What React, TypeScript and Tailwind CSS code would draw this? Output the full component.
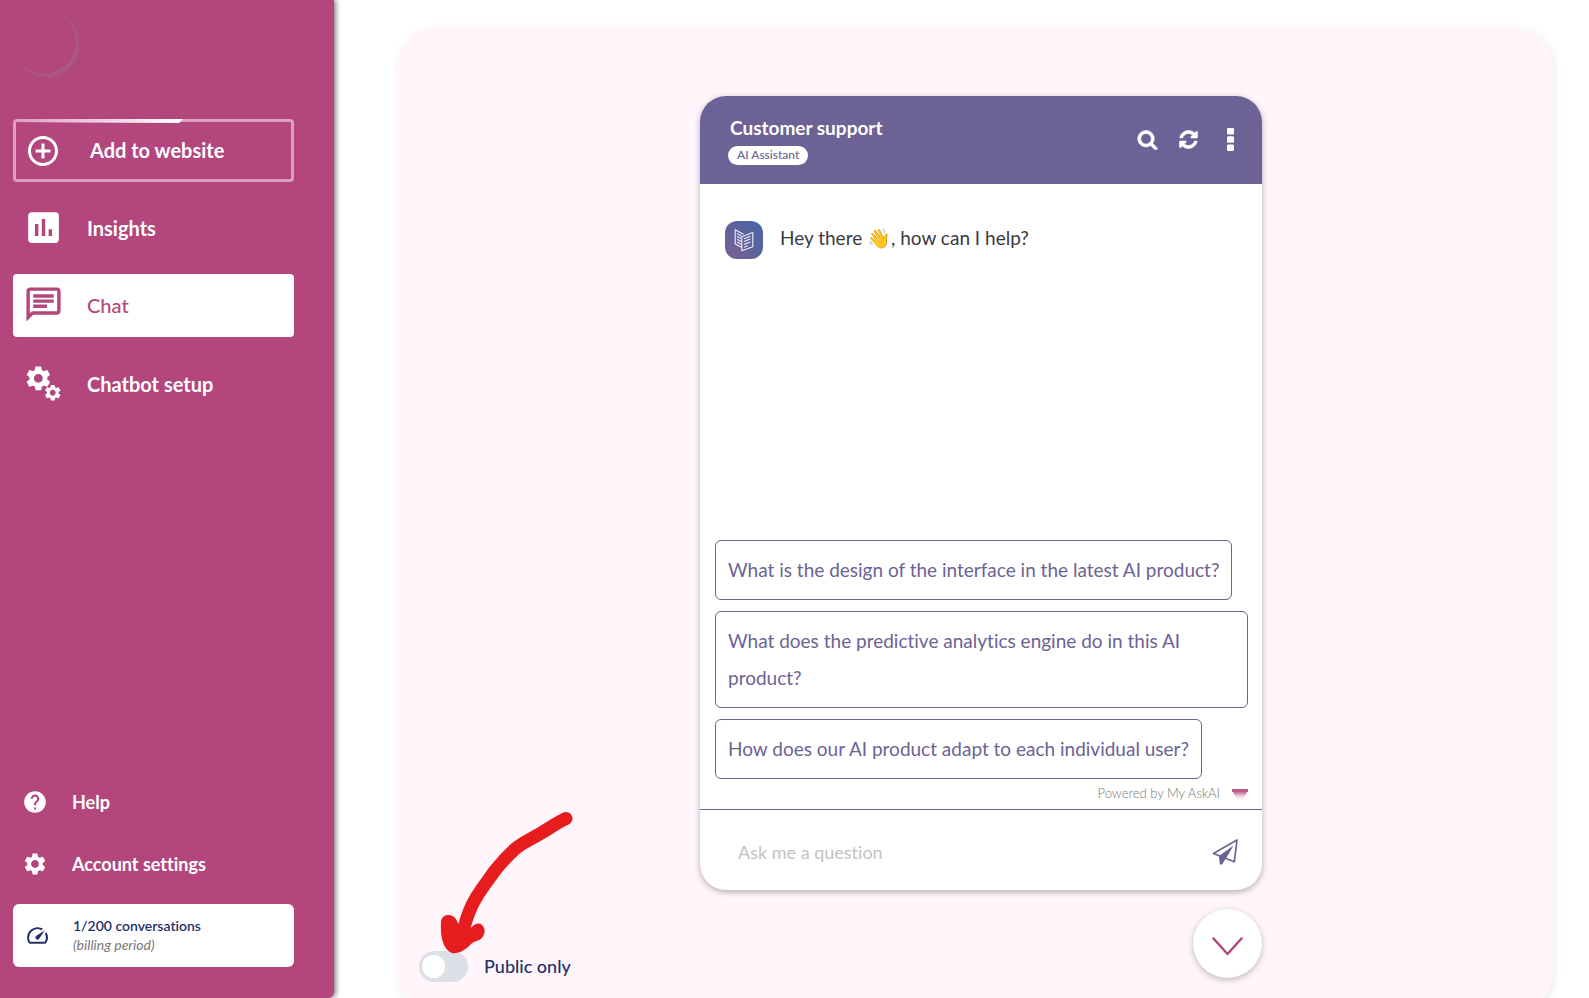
import React, { useState } from "react";
import {
  MdAddCircleOutline,
  MdHelp,
  MdInsertChart,
  MdOutlineChat,
  MdOutlineSpeed,
  MdSettings,
} from "react-icons/md";

const suggestions = [
  "What is the design of the interface in the latest AI product?",
  "What does the predictive analytics engine do in this AI product?",
  "How does our AI product adapt to each individual user?",
];

function GearsIcon() {
  return (
    <svg width="35" height="35" viewBox="0 0 34 34" aria-hidden="true">
      <MdSettings x="-2.5" y="-2.5" size={29} />
      <MdSettings x="16.5" y="16.5" size={19} />
    </svg>
  );
}

function SearchIcon() {
  return (
    <svg width="21" height="21" viewBox="0 0 1792 1792" fill="currentColor" stroke="currentColor" strokeWidth="50" aria-hidden="true">
      <path d="M1216 832q0-185-131.5-316.5t-316.5-131.5-316.5 131.5-131.5 316.5 131.5 316.5 316.5 131.5 316.5-131.5 131.5-316.5zm512 832q0 52-38 90t-90 38q-54 0-90-38l-343-342q-179 124-399 124-143 0-273.5-55.5t-225-150-150-225-55.5-273.5 55.5-273.5 150-225 225-150 273.5-55.5 273.5 55.5 225 150 150 225 55.5 273.5q0 220-124 399l343 343q37 37 37 90z" />
    </svg>
  );
}

function RefreshIcon() {
  return (
    <svg width="21" height="21" viewBox="0 0 1792 1792" fill="currentColor" stroke="currentColor" strokeWidth="50" aria-hidden="true">
      <path d="M1639 1056q0 5-1 7-64 268-268 434.5t-478 166.5q-146 0-282.5-55t-243.5-157l-129 129q-19 19-45 19t-45-19-19-45v-448q0-26 19-45t45-19h448q26 0 45 19t19 45-19 45l-137 137q71 66 161 102t187 36q134 0 250-65t186-179q11-17 53-117 8-23 30-23h192q13 0 22.5 9.5t9.5 22.5zm25-800v448q0 26-19 45t-45 19h-448q-26 0-45-19t-19-45 19-45l138-138q-148-137-349-137-134 0-250 65t-186 179q-11 17-53 117-8 23-30 23h-199q-13 0-22.5-9.5t-9.5-22.5v-7q65-268 270-434.5t480-166.5q146 0 284 55.5t245 156.5l130-129q19-19 45-19t45 19 19 45z" />
    </svg>
  );
}

function MoreIcon() {
  return (
    <svg width="7" height="23" viewBox="0 0 7 23" fill="currentColor" aria-hidden="true">
      <rect width="7" height="6.4" rx="1.2" />
      <rect y="8.3" width="7" height="6.4" rx="1.2" />
      <rect y="16.6" width="7" height="6.4" rx="1.2" />
    </svg>
  );
}

function BookIcon() {
  return (
    <svg width="20" height="24" viewBox="0 0 20 24" fill="none" stroke="#f1effa" strokeWidth="1.1" strokeLinejoin="round" aria-hidden="true">
      <path d="M8 19.5 1.2 16V1.7l8.3 4.6" />
      <path d="M7.8 8.8 18.8 4.6v14.2L7.8 22.8z" />
      <path d="M3 5.6 7.4 8M3 8.4 7 10.6M3 11.2l4 2.2M3 14l4 2.2M10 10.8l6.4-2.5M10 13.6l6.4-2.5M10 16.4l6.4-2.5M10 19.2l3.6-1.4" />
    </svg>
  );
}

function SendIcon() {
  return (
    <svg width="26" height="26" viewBox="0 0 26 26" aria-hidden="true">
      <path d="M25 1 1.3 14.4l6 2.3L22.3 22.8z" fill="none" stroke="#6c6295" strokeWidth="1.7" strokeLinejoin="round" />
      <path d="M21.5 6.5 7 16.9 7.8 25.6 9.8 25.4 14 19.6z" fill="#6c6295" />
    </svg>
  );
}

function BrandMark() {
  return (
    <svg width="16" height="10" viewBox="0 0 16 10" aria-hidden="true">
      <path d="M0 0h16v3H0z" fill="#b9598c" />
      <path d="M1 3h14l-1 2H2z" fill="#cd83aa" />
      <path d="M2 5h12l-1.4 2H3.4z" fill="#e2b3cb" />
      <path d="M3.4 7h9.2L11 10H5z" fill="#f5e3ec" />
    </svg>
  );
}

function DrawnArrow() {
  return (
    <svg className="pointer-events-none absolute -top-[141px] left-[21px]" width="134" height="144" viewBox="0 0 134 144" aria-hidden="true">
      <path d="M126 8.500C118 12 110 18 97 25.500C88 30.500 82 33 75 39C68 45.500 61 53 55 60.500C49 69 42 78 36.500 87C31 96 27 106 24 118" fill="none" stroke="#e71c1c" strokeWidth="13" strokeLinecap="round" strokeLinejoin="round" />
      <path d="M1 112C1.500 103 13 103 16.500 110L19 115L30 119C35 113 39 112.500 42 115C46.500 119 45 127 39 130C33 132 32 133 28 137C22 142 17 144 11.500 143C3 139 0 126 1 112z" fill="#e71c1c" />
    </svg>
  );
}

const navItem = "flex h-[63px] w-full items-center rounded text-left text-[20px] font-bold text-white";

function Sidebar() {
  return (
    <aside className="z-10 flex w-[334px] shrink-0 flex-col rounded-br-md bg-[#b2467d] pl-[13px] pr-10 pt-[11px] pb-[31px] shadow-[2px_0_5px_rgba(0,0,0,0.5)]">
      <div className="size-[63px] rounded-full shadow-[2px_2px_5px_rgba(150,150,150,0.4)]" />
      <button type="button" className="relative mt-[45px] flex h-[63px] w-full items-center rounded border-[3px] border-[#dc9fbf] pl-[9px] text-[20px] font-bold text-white">
        <svg className="absolute -top-[3px] left-0" width="167" height="4" viewBox="0 0 167 4" aria-hidden="true">
          <defs>
            <linearGradient id="sweep">
              <stop offset="0" stopColor="#fff" stopOpacity="0" />
              <stop offset="1" stopColor="#fff" />
            </linearGradient>
          </defs>
          <path d="M0 0h167l-4 4H0z" fill="url(#sweep)" />
        </svg>
        <MdAddCircleOutline size={36} />
        <span className="pb-px pl-[29px]">Add to website</span>
      </button>
      <nav className="mt-[14px] flex flex-col gap-[15px]">
        <button type="button" className={navItem}>
          <span className="flex w-[60px] justify-center"><MdInsertChart size={41} /></span>
          <span className="pl-[14px]">Insights</span>
        </button>
        <button type="button" className="flex h-[63px] w-full items-center rounded bg-white pb-[2px] text-left text-[20px] font-medium text-[#b2467d]">
          <span className="flex w-[60px] justify-center"><MdOutlineChat size={41} /></span>
          <span className="pl-[14px]">Chat</span>
        </button>
        <button type="button" className={navItem}>
          <span className="flex w-[60px] justify-center"><GearsIcon /></span>
          <span className="pl-[14px]">Chatbot setup</span>
        </button>
      </nav>
      <div className="mt-auto flex flex-col">
        <a href="#help" className="flex h-[62px] items-center gap-6 pl-[9px] text-[18px] font-bold text-white">
          <MdHelp size={26} />
          Help
        </a>
        <a href="#account" className="flex h-[62px] items-center gap-6 pl-[9px] text-[18px] font-bold text-white">
          <MdSettings size={26} />
          Account settings
        </a>
        <div className="mt-[9px] flex h-[63px] items-center gap-[23px] rounded-md bg-white pl-3">
          <MdOutlineSpeed size={25} color="#22306a" />
          <p className="pb-[2px] text-[14px] leading-[19px]">
            <span className="block font-semibold text-[#22306a]">1/200 conversations</span>
            <span className="block italic text-[#777]">(billing period)</span>
          </p>
        </div>
      </div>
    </aside>
  );
}

function ChatCard() {
  return (
    <section className="flex h-[794px] flex-col overflow-hidden rounded-[26px] bg-white shadow-[0_2px_6px_rgba(0,0,0,0.3)]">
      <header className="flex h-[88px] shrink-0 items-center justify-between bg-[#6c6295] px-7 text-white">
        <div className="flex flex-col items-start gap-[6px]">
          <h1 className="pl-[2px] text-[19px] font-bold leading-6">Customer support</h1>
          <span className="flex h-[19px] items-center rounded-full bg-white px-[9px] text-[12px] font-medium text-[#6c6295]">AI Assistant</span>
        </div>
        <div className="flex items-center gap-5 pb-[2px]">
          <button type="button" aria-label="Search"><SearchIcon /></button>
          <button type="button" aria-label="Restart chat"><RefreshIcon /></button>
          <button type="button" aria-label="More options" className="ml-2"><MoreIcon /></button>
        </div>
      </header>
      <div className="flex flex-1 flex-col justify-between pl-[15px] pr-[14px] pt-[37px]">
        <div className="flex items-start gap-[17px] pl-[10px]">
          <span className="flex size-[38px] items-center justify-center rounded-xl bg-linear-to-bl from-[#4667a8] via-[#5d629b] to-[#7d5f94]">
            <BookIcon />
          </span>
          <p className="text-[19px] leading-[34px] text-[#3a3a44]">Hey there 👋, how can I help?</p>
        </div>
        <div className="flex flex-col items-start gap-[11px]">
          {suggestions.map((text) => (
            <button key={text} type="button" className="rounded-md border border-[#6c6295] px-3 pt-[10px] pb-[11px] text-left text-[19px] leading-[37px] text-[#6c6295]">
              {text}
            </button>
          ))}
          <a href="#powered" className="-mt-[11px] flex h-[30px] items-center gap-3 self-end text-[13px] font-light text-[#777]">
            Powered by My AskAI
            <BrandMark />
          </a>
        </div>
      </div>
      <form className="flex h-[81px] shrink-0 items-center border-t border-[#6c6295] pl-[38px] pr-6 pt-1" onSubmit={(e) => e.preventDefault()}>
        <input type="text" aria-label="Ask me a question" placeholder="Ask me a question" className="min-w-0 flex-1 bg-transparent text-[18px] text-[#3a3a44] outline-none placeholder:text-[#c2c2c2]" />
        <button type="submit" aria-label="Send"><SendIcon /></button>
      </form>
    </section>
  );
}

function PublicToggle() {
  const [on, setOn] = useState(false);
  return (
    <div className="relative mb-[31px] ml-[10px] self-end">
      <label className="flex items-center gap-4 text-[18px] font-medium text-[#22306a]">
        <input type="checkbox" checked={on} onChange={() => setOn(!on)} className="peer sr-only" />
        <span className="flex h-[31px] w-[49px] items-center rounded-full bg-[#dce0e6] px-[3px] peer-checked:justify-end peer-checked:bg-[#b2467d]">
          <span className="size-[23px] rounded-full bg-white" />
        </span>
        Public only
      </label>
      <DrawnArrow />
    </div>
  );
}

export default function App() {
  return (
    <div className="flex h-screen overflow-hidden bg-white font-['Lato','Noto_Sans',sans-serif] [font-variant-ligatures:none]">
      <Sidebar />
      <main className="min-w-0 flex-1 overflow-hidden pl-[62px] pr-9 pt-[27px]">
        <div className="grid grid-cols-[1fr_562px_1fr] rounded-[40px] bg-[#fff5fb] pl-[13px] pt-[69px] shadow-[2px_2px_8px_rgba(0,0,0,0.08)]">
          <PublicToggle />
          <div className="flex flex-col items-end gap-[19px] pb-[35px]">
            <div className="w-full"><ChatCard /></div>
            <button type="button" aria-label="Scroll down" className="flex size-[69px] items-center justify-center rounded-full bg-white pt-[6px] shadow-[0_2px_6px_rgba(0,0,0,0.25)]">
              <svg width="31" height="19" viewBox="0 0 31 19" fill="none" stroke="#b2467d" strokeWidth="2.500" strokeLinecap="round" strokeLinejoin="round" aria-hidden="true">
                <path d="M1.500 1.500 15.500 17 29.500 1.500" />
              </svg>
            </button>
          </div>
        </div>
      </main>
    </div>
  );
}
